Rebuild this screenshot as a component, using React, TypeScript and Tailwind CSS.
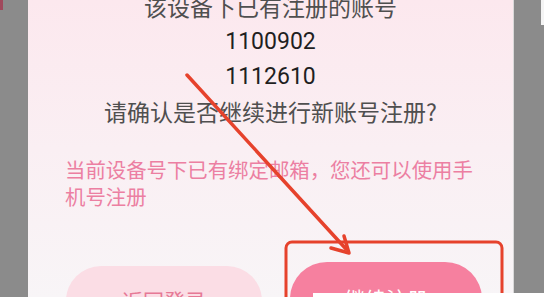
export default function App() {
  return (
    <div
      className="relative flex h-[297px] w-[544px] overflow-hidden bg-[#8b8b8b]"
      style={{ fontFamily: '"Noto Sans CJK SC", Roboto, "Noto Sans", sans-serif' }}
    >
      <div className="w-[28px] shrink-0" />

      <div className="flex w-[486px] shrink-0 flex-col border-r border-[#d9d9d9] bg-gradient-to-b from-[#fce8ee] via-[#faeff3] to-[#f8f5f7]">
        <div className="-mt-[11px] text-center text-[23px] leading-[35px] text-[#4f4f4f]">
          <div>该设备下已有注册的账号</div>
          <div className="text-[#1f1f1f]" style={{ fontFamily: 'Roboto, "Noto Sans CJK SC", sans-serif' }}>
            1100902
          </div>
          <div className="text-[#1f1f1f]" style={{ fontFamily: 'Roboto, "Noto Sans CJK SC", sans-serif' }}>
            1112610
          </div>
          <div>请确认是否继续进行新账号注册?</div>
        </div>

        <p className="mt-[27px] px-[37px] text-[20.4px] leading-[27px] text-[#ec7fa2]">
          当前设备号下已有绑定邮箱，您还可以使用手机号注册
        </p>

        <div className="mt-[52px] flex items-start gap-[28px] pl-[38px]">
          <button className="mt-[4px] flex h-[70px] w-[196px] items-center justify-center rounded-full bg-[#fbdde5] text-[21px] text-[#e67996]">
            返回登录
          </button>
          <button className="flex h-[74px] w-[192px] items-center justify-center rounded-full bg-[#f6809f] text-[21px] text-white">
            继续注册
          </button>
        </div>
      </div>

      <div className="flex-1" />

      {/* annotation overlay */}
      <svg className="pointer-events-none absolute left-0 top-0" width="544" height="297" viewBox="0 0 544 297">
        <rect x="286" y="242" width="216" height="80" rx="6" fill="none" stroke="#e6422c" strokeWidth="3" />
        <line x1="187" y1="75" x2="346" y2="249" stroke="#e6422c" strokeWidth="3.5" strokeLinecap="round" />
        <polyline
          points="344,236 349,253 331,248"
          fill="none"
          stroke="#e6422c"
          strokeWidth="3.5"
          strokeLinecap="round"
          strokeLinejoin="round"
        />
      </svg>

      <div className="absolute left-[313px] top-[293px] h-[4px] w-[231px] bg-white" />
      <div className="absolute right-0 top-0 h-[25px] w-[3px] bg-[#f4f4f4]" />
      <div className="absolute left-0 top-0 h-[10px] w-[3px] bg-[#a0495c]" />
    </div>
  );
}
